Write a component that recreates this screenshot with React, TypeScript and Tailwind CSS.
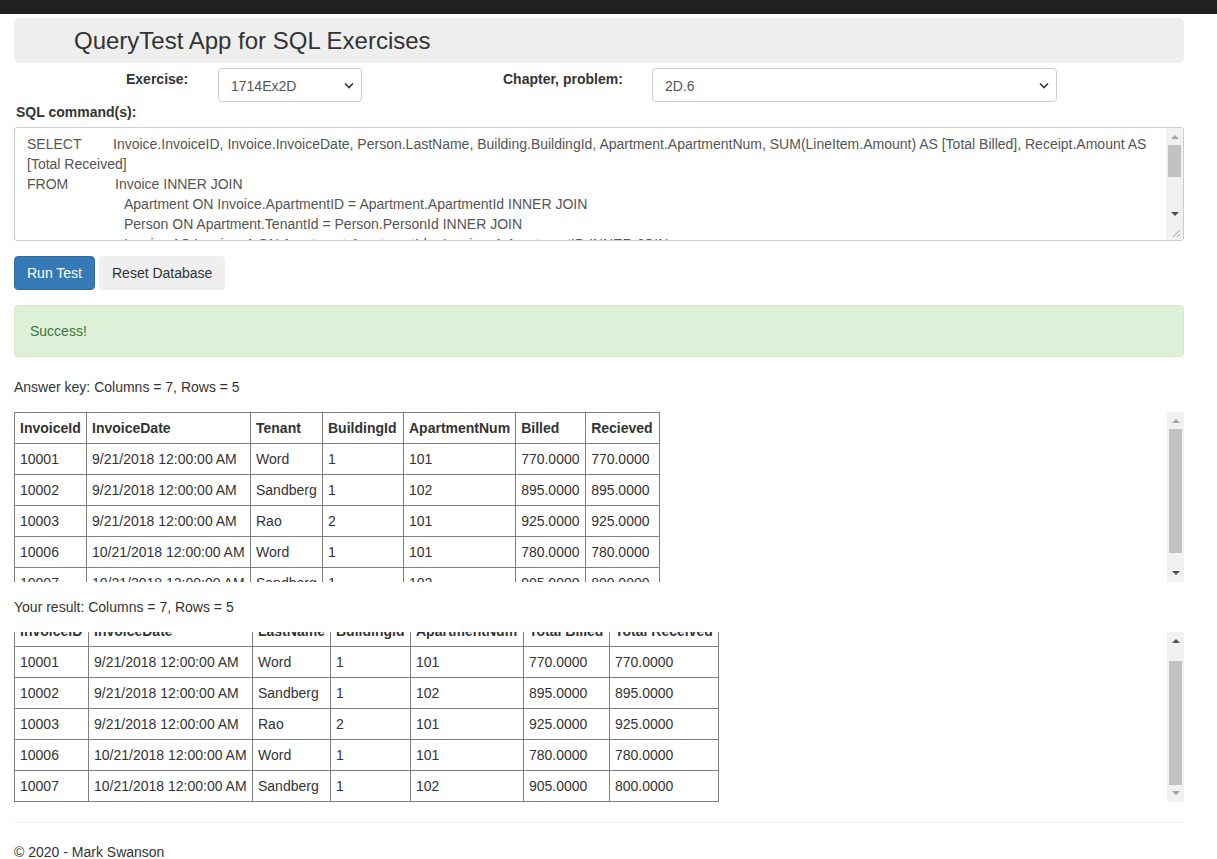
import React from "react";

type Row = string[];

const answerHead = ["InvoiceId", "InvoiceDate", "Tenant", "BuildingId", "ApartmentNum", "Billed", "Recieved"];
const resultHead = ["InvoiceID", "InvoiceDate", "LastName", "BuildingId", "ApartmentNum", "Total Billed", "Total Received"];

// column widths as measured in the reference
const answerCols = ["w-[72px]", "w-[164px]", "w-[72px]", "w-[81px]", "w-[112px]", "w-[70px]", "w-[74px]"];
const resultCols = ["w-[74px]", "w-[164px]", "w-[78px]", "w-[80px]", "w-[113px]", "w-[86px]", "w-[109px]"];

const rows: Row[] = [
  ["10001", "9/21/2018 12:00:00 AM", "Word", "1", "101", "770.0000", "770.0000"],
  ["10002", "9/21/2018 12:00:00 AM", "Sandberg", "1", "102", "895.0000", "895.0000"],
  ["10003", "9/21/2018 12:00:00 AM", "Rao", "2", "101", "925.0000", "925.0000"],
  ["10006", "10/21/2018 12:00:00 AM", "Word", "1", "101", "780.0000", "780.0000"],
  ["10007", "10/21/2018 12:00:00 AM", "Sandberg", "1", "102", "905.0000", "800.0000"],
];

const Arrow: React.FC<{ up?: boolean; dim?: boolean }> = ({ up, dim }) => (
  <div className="h-[17px] flex items-center justify-center">
    <svg width="8" height="5" viewBox="0 0 8 5">
      <path d={up ? "M0 5 L4 1 L8 5 Z" : "M0 0 L8 0 L4 4 Z"} fill={dim ? "#a3a3a3" : "#505050"} />
    </svg>
  </div>
);

const Scrollbar: React.FC<{ thumbClass: string; upDim?: boolean; downDim?: boolean }> = ({
  thumbClass,
  upDim,
  downDim,
}) => (
  <div className="w-[17px] h-full bg-[#f1f1f1] flex flex-col shrink-0">
    <Arrow up dim={upDim} />
    <div className="flex-1 px-[2px]">
      <div className={"bg-[#c1c1c1] " + thumbClass}></div>
    </div>
    <Arrow dim={downDim} />
  </div>
);

const Chevron: React.FC = () => (
  <svg width="10" height="7" viewBox="0 0 10 7">
    <path d="M1 1.5 L5 5.5 L9 1.5" fill="none" stroke="#333" strokeWidth="1.6" />
  </svg>
);

const DataTable: React.FC<{ head: string[]; cols: string[]; shiftClass?: string }> = ({ head, cols, shiftClass }) => (
  <table className={"border-collapse text-[14px] leading-[20px] text-[#333] " + (shiftClass ?? "")}>
    <thead>
      <tr>
        {head.map((h, i) => (
          <th
            key={h}
            className={"border border-[#808080] px-[5px] py-[5px] text-left font-bold whitespace-nowrap " + cols[i]}
          >
            {h}
          </th>
        ))}
      </tr>
    </thead>
    <tbody>
      {rows.map((r) => (
        <tr key={r[0]}>
          {r.map((c, i) => (
            <td key={i} className="border border-[#808080] px-[5px] py-[5px] whitespace-nowrap">
              {c}
            </td>
          ))}
        </tr>
      ))}
    </tbody>
  </table>
);

export default function App() {
  return (
    <div
      className="min-h-screen bg-white text-[14px] leading-[20px] text-[#333]"
      style={{ fontFamily: '"Liberation Sans", Arial, Helvetica, sans-serif' }}
    >
      <div className="h-[14px] bg-[#222]"></div>

      <div className="ml-[14px] w-[1170px]">
        {/* title */}
        <div className="mt-[4px] h-[45px] bg-[#eee] rounded-[6px] pl-[60px] flex items-center">
          <h1 className="text-[24px] leading-[28px] text-[#333] font-normal">QueryTest App for SQL Exercises</h1>
        </div>

        {/* selectors */}
        <div className="mt-[5px] flex items-start h-[34px]">
          <label className="ml-[112px] w-[92px] font-bold pt-[1px]">Exercise:</label>
          <div className="w-[144px] h-[34px] border border-[#ccc] rounded-[4px] flex items-center justify-between pl-[12px] pr-[7px] text-[#555]">
            <span className="pt-[2px]">1714Ex2D</span>
            <Chevron />
          </div>
          <label className="ml-[141px] w-[149px] font-bold pt-[1px]">Chapter, problem:</label>
          <div className="w-[405px] h-[34px] border border-[#ccc] rounded-[4px] flex items-center justify-between pl-[12px] pr-[7px] text-[#555]">
            <span className="pt-[2px]">2D.6</span>
            <Chevron />
          </div>
        </div>

        <div className="font-bold pl-[2px]">SQL command(s):</div>

        {/* sql text */}
        <div className="mt-[5px] h-[114px] border border-[#ccc] rounded-[3px] flex overflow-hidden text-[#555]">
          <div className="flex-1 px-[12px] pt-[6px] overflow-hidden">
            <div>
              <span className="inline-block w-[86px]">SELECT</span>
              Invoice.InvoiceID, Invoice.InvoiceDate, Person.LastName, Building.BuildingId, Apartment.ApartmentNum,
              SUM(LineItem.Amount) AS [Total Billed], Receipt.Amount AS [Total Received]
            </div>
            <div className="whitespace-nowrap">
              <span className="inline-block w-[88px]">FROM</span>Invoice INNER JOIN
            </div>
            <div className="pl-[97px] whitespace-nowrap">
              Apartment ON Invoice.ApartmentID = Apartment.ApartmentId INNER JOIN
            </div>
            <div className="pl-[97px] whitespace-nowrap">Person ON Apartment.TenantId = Person.PersonId INNER JOIN</div>
            <div className="pl-[97px] whitespace-nowrap">
              Invoice AS Invoice_1 ON Apartment.ApartmentId = Invoice_1.ApartmentID INNER JOIN
            </div>
          </div>
          <div className="w-[17px] flex flex-col shrink-0">
            <div className="h-[95px]">
              <Scrollbar thumbClass="h-[32px]" upDim />
            </div>
            <div className="flex-1 bg-[#f1f1f1] flex items-end justify-end p-[2px]">
              <svg width="10" height="10" viewBox="0 0 10 10">
                <path d="M9 2 L2 9 M9 6 L6 9" stroke="#999" strokeWidth="1" />
              </svg>
            </div>
          </div>
        </div>

        {/* buttons */}
        <div className="mt-[15px] flex gap-[4px]">
          <button className="h-[34px] px-[12px] bg-[#337ab7] border border-[#2e6da4] rounded-[4px] text-white">
            Run Test
          </button>
          <button className="h-[34px] px-[12px] bg-[#efefef] border border-[#efefef] rounded-[4px] text-[#333]">
            Reset Database
          </button>
        </div>

        <div className="mt-[15px] h-[52px] bg-[#dff0d8] border border-[#d6e9c6] rounded-[4px] px-[15px] flex items-center text-[#3c763d]">
          Success!
        </div>

        <div className="mt-[20px]">Answer key: Columns = 7, Rows = 5</div>

        <div className="mt-[15px] h-[170px] flex">
          <div className="flex-1 overflow-hidden">
            <DataTable head={answerHead} cols={answerCols} />
          </div>
          <Scrollbar thumbClass="h-[124px]" upDim />
        </div>

        <div className="mt-[15px]">Your result: Columns = 7, Rows = 5</div>

        <div className="mt-[15px] h-[170px] flex">
          <div className="flex-1 overflow-hidden">
            <DataTable head={resultHead} cols={resultCols} shiftClass="-mt-[17px]" />
          </div>
          <Scrollbar thumbClass="mt-[12px] h-[124px]" downDim />
        </div>

        <hr className="mt-[20px] border-0 border-t border-[#eee]" />

        <footer className="mt-[19px]">© 2020 - Mark Swanson</footer>
      </div>
    </div>
  );
}
